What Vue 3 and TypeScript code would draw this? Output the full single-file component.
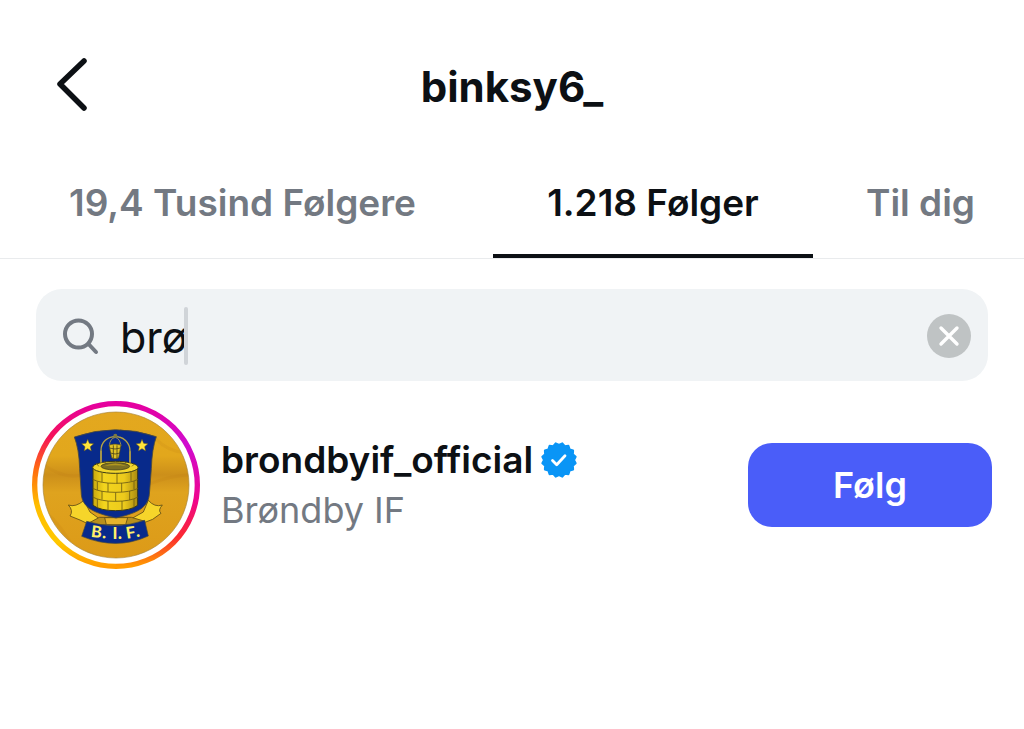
<script setup lang="ts">
import { computed, ref } from 'vue'

interface Tab { id: string; label: string }
interface Account { handle: string; name: string; verified: boolean }

const tabs: Tab[] = [
  { id: 'followers', label: '19,4 Tusind Følgere' },
  { id: 'following', label: '1.218 Følger' },
  { id: 'suggested', label: 'Til dig' },
]
const active = ref('following')
const query = ref('brø')
const accounts: Account[] = [
  { handle: 'brondbyif_official', name: 'Brøndby IF', verified: true },
]
const results = computed(() => accounts)

// Scalloped outline: outer tips alternate with shallow inner notches.
const badge = Array.from({ length: 32 }, (_, i) => {
  const r = i % 2 === 0 ? 17 : 15
  const a = (i * Math.PI) / 16 - Math.PI / 2 + Math.PI / 16
  return `${(18 + r * Math.cos(a)).toFixed(2)},${(18 + r * Math.sin(a)).toFixed(2)}`
}).join(' ')
</script>

<template>
  <main class="screen">
    <header class="bar">
      <button class="back" type="button" aria-label="Tilbage">
        <svg width="36" height="60" viewBox="0 0 36 60" aria-hidden="true">
          <path d="M30 7 6 30l24 24" fill="none" stroke="#0c1014" stroke-width="5.500" stroke-linecap="round" stroke-linejoin="round" />
        </svg>
      </button>
      <h1>binksy6_</h1>
    </header>

    <nav class="tabs">
      <button
        v-for="t in tabs"
        :key="t.id"
        type="button"
        class="tab"
        :class="{ active: t.id === active }"
        @click="active = t.id"
      >{{ t.label }}</button>
    </nav>

    <div class="search">
      <svg class="lens" width="38" height="38" viewBox="0 0 38 38" aria-hidden="true">
        <g fill="none" stroke="#737982" stroke-width="4" stroke-linecap="round">
          <circle cx="16.500" cy="17" r="13.500" />
          <path d="M26.500 27l7.500 8" />
        </g>
      </svg>
      <input v-model="query" class="field" type="text" aria-label="Søg" />
      <span class="caret"></span>
      <button class="clear" type="button" aria-label="Ryd" @click="query = ''">
        <svg width="44" height="44" viewBox="0 0 44 44" aria-hidden="true">
          <circle cx="22" cy="22" r="22" fill="#bfc3c4" />
          <path d="M14 14l16 16M30 14 14 30" stroke="#fff" stroke-width="3.400" stroke-linecap="round" />
        </svg>
      </button>
    </div>

    <ul class="list">
      <li v-for="a in results" :key="a.handle" class="row">
        <svg class="avatar" width="168" height="168" viewBox="20 17 504 504" role="img" :aria-label="a.name">
          <defs>
            <linearGradient id="ringRight" x1="0" y1="0" x2="0" y2="1">
              <stop offset="0" stop-color="#e5009f" />
              <stop offset="0.25" stop-color="#cf0bd0" />
              <stop offset="0.6" stop-color="#f0058a" />
              <stop offset="0.82" stop-color="#fb2a30" />
              <stop offset="1" stop-color="#ff9c00" />
            </linearGradient>
            <linearGradient id="ringLeft" x1="0" y1="0" x2="0" y2="1">
              <stop offset="0" stop-color="#e5009f" />
              <stop offset="0.2" stop-color="#f5125a" />
              <stop offset="0.4" stop-color="#ff6a10" />
              <stop offset="0.62" stop-color="#ffbd00" />
              <stop offset="0.85" stop-color="#ffc800" />
              <stop offset="1" stop-color="#ff9c00" />
            </linearGradient>
            <linearGradient id="cloth" x1="0" y1="0" x2="0" y2="1">
              <stop offset="0" stop-color="#e3a81f" />
              <stop offset="0.3" stop-color="#e2a71c" />
              <stop offset="0.43" stop-color="#cc8f1a" />
              <stop offset="0.55" stop-color="#dfa31e" />
              <stop offset="1" stop-color="#dc9a18" />
            </linearGradient>
            <linearGradient id="brick" x1="0" y1="0" x2="1" y2="0">
              <stop offset="0" stop-color="#c9a80e" />
              <stop offset="0.25" stop-color="#f3d51e" />
              <stop offset="0.7" stop-color="#ecca1c" />
              <stop offset="1" stop-color="#a98a10" />
            </linearGradient>
            <clipPath id="disc"><circle cx="272" cy="269" r="219" /></clipPath>
          </defs>
          <path d="M272 25A244 244 0 0 1 272 513" fill="none" stroke="url(#ringRight)" stroke-width="16" />
          <path d="M272 513A244 244 0 0 1 272 25" fill="none" stroke="url(#ringLeft)" stroke-width="16" />
          <circle cx="272" cy="269" r="219" fill="url(#cloth)" />
          <g clip-path="url(#disc)" fill="none" stroke="#b97b12" stroke-opacity=".15" stroke-width="9">
            <path d="M50 205Q110 250 165 240M375 265Q440 240 500 238M60 350Q110 390 150 470M390 130Q430 170 475 170" />
          </g>
          <circle cx="272" cy="269" r="219" fill="none" stroke="#a98538" stroke-width="2" />
          <g stroke="#5e4c16" stroke-width="2.500" stroke-linejoin="round">
            <path fill="#f6d52a" d="M129 329Q151 337 176 315L194 350 219 368 214 386 187 385 164 374 134 362Q145 346 129 329Z" />
            <path fill="#f6d52a" d="M411 329Q388 337 369 315L354 350 322 368 330 380 356 382 382 372 407 354Q397 345 411 329Z" />
            <path fill="#b9901c" d="M187 385 222 366H318L359 378 325 388H220Z" />
            <path fill="#e5b32c" d="M238 367H307L301 388H243Z" />
          </g>
          <path fill="#082a8b" stroke="#4a4b3c" stroke-width="2.500" d="M147 125Q270 82 393 124 380 160 378 220L372 298C367 342 326 355 272 368 217 355 172 342 168 298L163 220Q161 160 147 125Z" />
          <path fill="#082a8b" stroke="#4a4b3c" stroke-width="2" d="M184 378Q270 405 358 375L369 422Q274 466 169 423Z" />
          <g fill="#ffe53c" stroke="#594c20" stroke-width="1.500">
            <path d="m187 132 5 12 13 1-10 9 3 13-11-7-11 7 3-13-10-9 13-1Z" />
            <path d="m350 132 5 12 13 1-10 9 3 13-11-7-11 7 3-13-10-9 13-1Z" />
          </g>
          <g fill="none" stroke="#b7a344" stroke-width="4">
            <path d="M227 211V166C227 139 247 124 270 124S314 140 314 168V211" />
            <path stroke-width="2.500" d="M252 151Q254 129 270 126 284 130 287 151" />
          </g>
          <circle cx="270" cy="121" r="6" fill="#7d7a43" />
          <path fill="#e1c326" stroke="#514716" stroke-width="2" d="M251 149Q269 143 287 149L280 187Q269 194 259 187Z" />
          <path fill="none" stroke="#4a461c" stroke-width="2.500" d="M252 158Q269 164 286 158M255 173Q269 179 284 173M264 150V190M275 150V190" />
          <path fill="url(#brick)" stroke="#383817" stroke-width="3" d="M203 215V330Q225 346 270 346T337 330V215Z" />
          <ellipse cx="270" cy="216" rx="68" ry="18" fill="#f2d62c" stroke="#383817" stroke-width="3" />
          <ellipse cx="270" cy="213" rx="43" ry="11" fill="#7d7024" stroke="#383817" stroke-width="2" />
          <path fill="#b3991f" d="M236 213Q270 196 304 213 270 206 236 213Z" />
          <path fill="none" stroke="#6b5c14" stroke-width="2.500" d="M202 252Q225 264 270 264T338 252M202 279Q225 291 270 291T338 279M202 305Q225 318 270 318T338 305M230 232V260M275 235V264M317 229V257M216 259V284M248 263V290M289 263V290M326 257V282M230 287V313M271 291V318M313 287V314M216 311V336M248 317V344M290 317V345M326 311V335M214 204 220 213M237 198 241 205M302 199 299 205M327 206 320 213" />
          <path d="M227 166V202M314 168V202" stroke="#b7a344" stroke-width="4" />
          <g class="motto">
            <text x="196" y="424" transform="rotate(7 196 424)">B.</text>
            <text x="262" y="432">I.</text>
            <text x="305" y="430" transform="rotate(-9 305 430)">F.</text>
          </g>
        </svg>
        <div class="who">
          <div class="handle">
            <span>{{ a.handle }}</span>
            <svg v-if="a.verified" width="36" height="36" viewBox="0 0 36 36" role="img" aria-label="Verificeret">
              <polygon :points="badge" fill="#0a95f6" stroke="#0a95f6" stroke-width="2" stroke-linejoin="round" />
              <path d="m11.500 18.500 4.200 4.200 8.300-9" fill="none" stroke="#fff" stroke-width="2.800" stroke-linecap="round" stroke-linejoin="round" />
            </svg>
          </div>
          <div class="name">{{ a.name }}</div>
        </div>
        <button class="follow" type="button">Følg</button>
      </li>
    </ul>
  </main>
</template>

<style scoped>
.screen {
  background: #fff;
  color: #0c1014;
  font-family: Inter, "Liberation Sans", sans-serif;
}
button {
  border: 0;
  padding: 0;
  background: none;
  color: inherit;
  font: inherit;
  cursor: pointer;
}
svg {
  display: block;
  flex: none;
}
.bar {
  display: grid;
  grid-template-columns: 36px 1fr 36px;
  align-items: start;
  padding: 54px 54px 0;
}
h1 {
  margin: 0;
  font-size: 42px;
  line-height: 66px;
  font-weight: 700;
  text-align: center;
}
.tabs {
  display: grid;
  grid-template-columns: 493fr 320fr 211fr;
  margin-top: 28px;
  border-bottom: 1px solid #e9ebed;
}
.tab {
  height: 110px;
  padding-top: 2px;
  color: #737982;
  font-size: 37px;
  font-weight: 600;
  white-space: nowrap;
  border-bottom: 4px solid transparent;
}
.tab:first-child { padding-right: 8px; }
.tab:last-child { padding-left: 4px; }
.tab.active {
  color: #0c1014;
  border-bottom-color: #0c1014;
}
.search {
  display: flex;
  align-items: center;
  height: 92px;
  box-sizing: border-box;
  margin: 30px 36px 0;
  padding: 2px 17px 0 26px;
  border-radius: 26px;
  background: #f0f3f5;
}
.field {
  field-sizing: content;
  margin-left: 20px;
  padding: 2px 0 0;
  border: 0;
  outline: 0;
  background: none;
  color: #0c1014;
  font: 400 43px/56px Inter, "Liberation Sans", sans-serif;
}
.caret {
  width: 4px;
  height: 58px;
  margin-left: -4px;
  border-radius: 2px;
  background: #d0d4d8;
}
.clear { margin-left: auto; }
.list {
  margin: 0;
  padding: 20px 32px;
  list-style: none;
}
.row {
  display: flex;
  align-items: center;
}
.who {
  flex: 1;
  min-width: 0;
  margin-left: 21px;
}
.handle {
  display: flex;
  align-items: center;
  gap: 8px;
  font-size: 37px;
  line-height: 50px;
  font-weight: 600;
}
.name {
  color: #737982;
  font-size: 36px;
  line-height: 50px;
}
.follow {
  width: 244px;
  height: 84px;
  border-radius: 24px;
  background: #4a5df9;
  color: #fff;
  font-size: 36px;
  font-weight: 600;
}
.motto {
  fill: #fff06a;
  font: 700 48px Inter, "Liberation Sans", sans-serif;
}
</style>

<style>
body { background: #fff; }
</style>
